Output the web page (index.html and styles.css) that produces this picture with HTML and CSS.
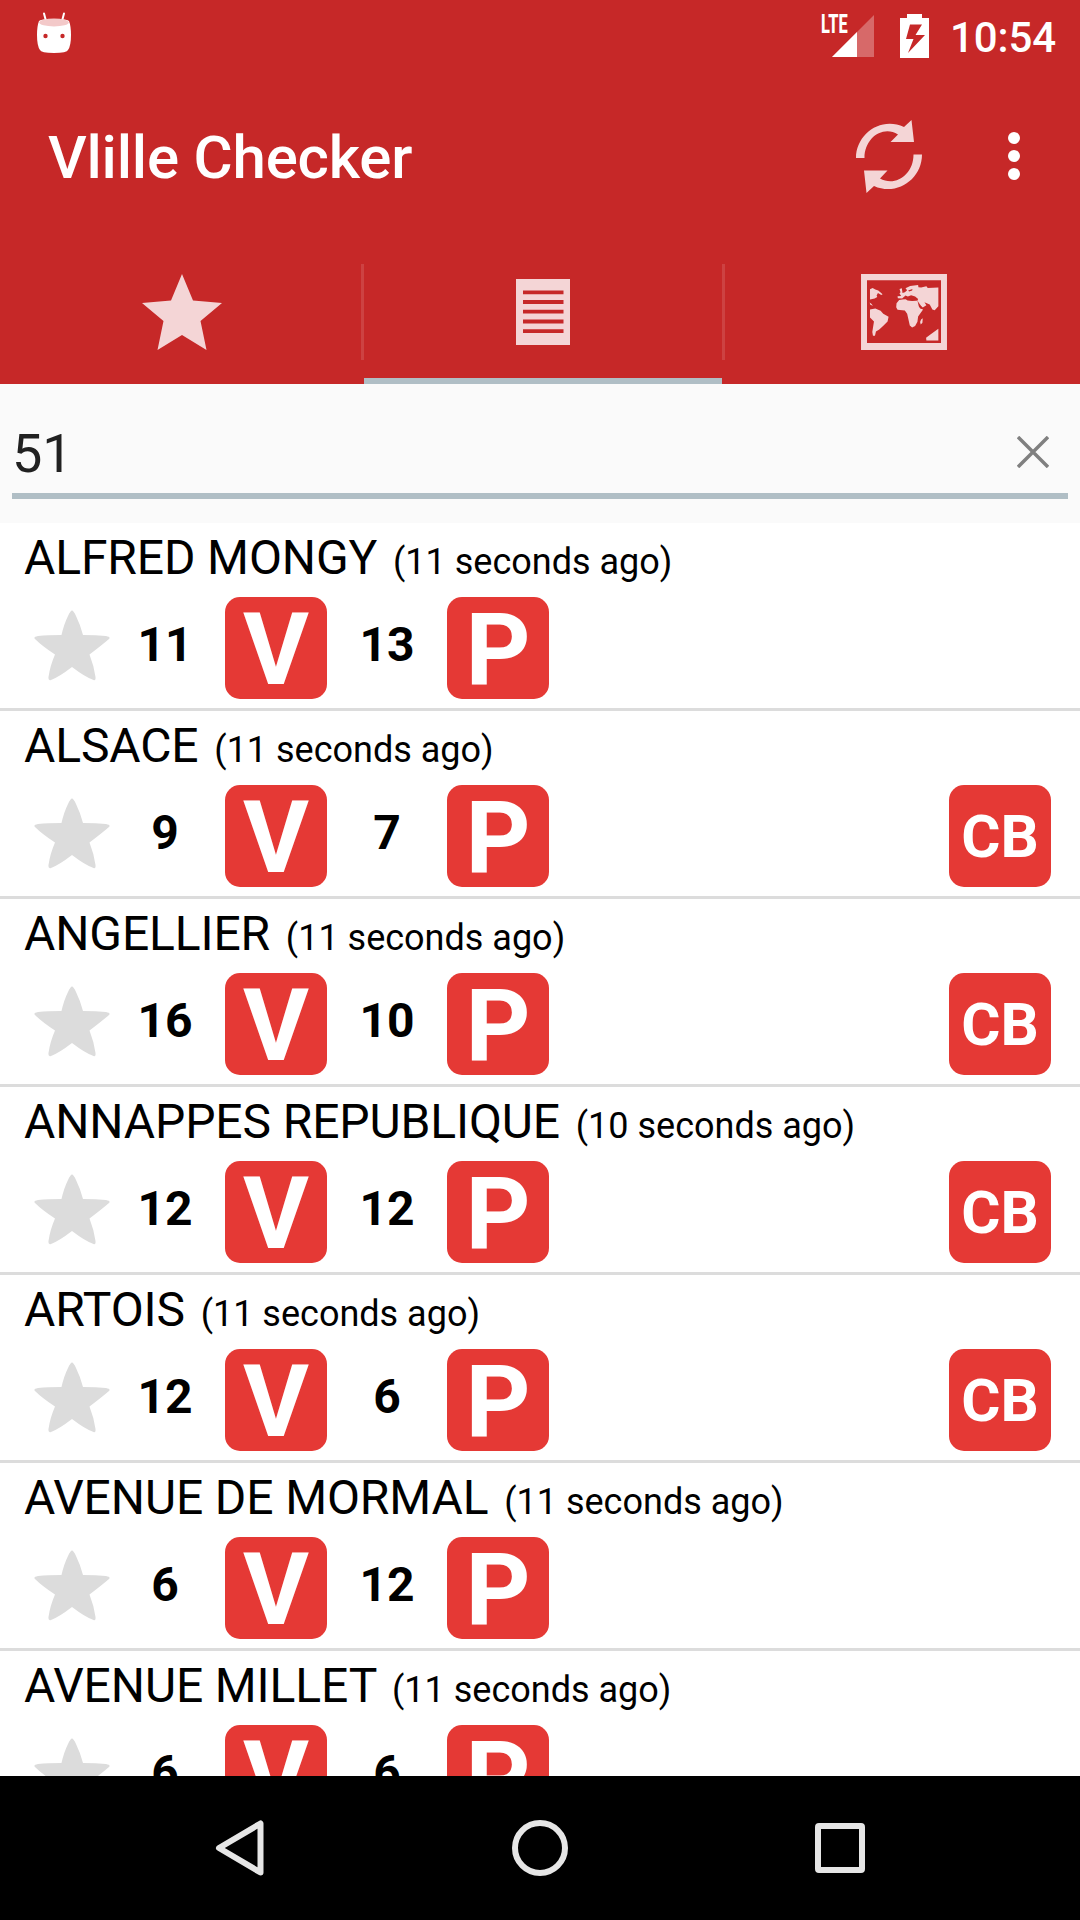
FILE: index.html
```html
<!DOCTYPE html>
<html lang="en">
<head>
<meta charset="utf-8">
<title>Vlille Checker</title>
<link rel="stylesheet" href="styles.css">
</head>
<body>
<svg class="defs" width="0" height="0">
  <symbol id="star" viewBox="0 0 76 71"><path d="M38 .5Q39.500 .5 42 6Q46 14 49 25Q62 25 72 26Q77 27 75 29Q68 35 55.500 44.500Q60 56 61.500 67Q62 71 59.500 70Q51 67 38 57Q25 67 17 70Q14 71 14.500 67Q16 56 21 44.500Q8 36 1 29Q-1 27 4 26Q14 25 27.500 25Q30 14 34 6Q36.500 .5 38 .5Z"/></symbol>
</svg>
<div class="screen">
  <header class="header">
    <div class="status">
      <svg class="droid" width="34" height="41" viewBox="0 0 34 41"><path d="M7 1.500L9 9M27 1.500L25 9" stroke="#fff" stroke-width="2" stroke-linecap="round"/><path d="M2 9Q3 7 17 7Q31 7 32 9Q34 14 34 23Q34 34 31 38Q30 41 17 41Q4 41 3 38Q0 34 0 23Q0 14 2 9Z" fill="#fff"/><ellipse cx="17" cy="10.500" rx="14.800" ry="3.900" fill="#f3c9c9"/><circle cx="8.500" cy="24" r="2.200" fill="#c62828"/><circle cx="25.500" cy="24" r="2.200" fill="#c62828"/></svg>
      <div class="status-right">
        <div class="signal">
          <span class="lte">LTE</span>
          <svg width="54" height="44" viewBox="0 0 54 44"><path d="M53 1V43H11Z" fill="#d76969"/><path d="M36 18V43H11Z" fill="#fff"/></svg>
        </div>
        <svg class="battery" width="29" height="44" viewBox="0 0 29 44"><path fill="#fff" fill-rule="evenodd" d="M7 0H22V4H29V44H0V4H7ZM10 10.500L6 25H13.500L8 39L25 21H15.500L22 10.500Z"/></svg>
        <span class="time">10:54</span>
      </div>
    </div>
    <div class="toolbar">
      <h1 class="title">Vlille Checker</h1>
      <svg class="refresh" width="66" height="73" viewBox="0 0 66 73"><g fill="#f4d5d6"><path d="M0 38C0 14 25-4 48 7L55.500 0L58 22H34.500L42 14.500C27 5 8.500 18 8.500 38Z"/><path d="M66 34.500C66 59 41 76.500 18 66L10.500 73L8 50.500H31.500L24 58.500C39 67 57.500 55 57.500 34.500Z"/></g></svg>
      <svg class="more" width="12" height="48" viewBox="0 0 12 48" fill="#fff"><circle cx="6" cy="6" r="6"/><circle cx="6" cy="24" r="6"/><circle cx="6" cy="42" r="6"/></svg>
    </div>
    <nav class="tabs">
      <div class="tab first"><svg width="80" height="76" viewBox="0 0 80 76"><path fill="#f4d5d6" d="M40 0L51 26.500L80 29L58.500 47L64.500 76L40 61L15.500 76L21.500 47L0 29L29 26.500Z"/></svg></div>
      <i class="divider"></i>
      <div class="tab active"><svg width="54" height="66" viewBox="0 0 54 66"><path fill="#f4d5d6" d="M0 0H54V66H0Z"/><path d="M7 13.300H47.500M7 23H47.500M7 32.700H47.500M7 42.500H47.500M7 52.200H47.500" stroke="#c62828" stroke-width="3.800"/></svg></div>
      <i class="divider"></i>
      <div class="tab"><svg width="86" height="76" viewBox="33 27 259 229"><g fill="#f4d5d6"><path fill-rule="evenodd" d="M33 27H292V256H33ZM51 46V235H274V46Z"/><path d="M60 73L68 69L76 74L85 77L98 88L94 90L84 84L80 92L82 96L74 101L60 104ZM59 113L64 117L69 123L61 120ZM60 134L76 131L92 138L100 147L116 156L113 170L101 182L88 194L78 200L75 213H69L67 202L72 170L60 158Z"/><path d="M149 86L152 82L149 72L156 70L158 84L165 82L172 76L167 70L181 63L205 60L206 67L214 68L230 64L234 69L266 68V124L255 136L248 134L240 119L224 112L230 121L219 128L213 122L206 112L203 106L205 102L196 95L184 91L174 95L167 92L157 101L144 100L143 94L154 93ZM148 105L168 102L173 107L187 108L203 107L207 124L211 131L220 134L205 155L203 171L196 184L187 188L180 182L172 147L165 137L143 135L139 127L140 115ZM214 164L219 160L218 174L213 179L211 172ZM229 219L240 211L266 192V227H230Z"/></g><path d="M160 102L177 98L185 103L201 100L203 106L188 107L173 104ZM175 77L188 72L187 77L178 80Z" fill="#c62828"/></svg></div>
    </nav>
  </header>
  <div class="search">
    <div class="field"><span class="query">51</span><svg class="clear" width="32" height="32" viewBox="0 0 32 32"><path d="M1 1L31 31M31 1L1 31" stroke="#808080" stroke-width="3.500"/></svg></div>
  </div>
  <main class="list">
    <section class="station"><div class="name">ALFRED MONGY <small>(11 seconds ago)</small></div><div class="info"><svg class="fav"><use href="#star"/></svg><b class="count">11</b><span class="badge">V</span><b class="count">13</b><span class="badge">P</span></div></section>
    <section class="station"><div class="name">ALSACE <small>(11 seconds ago)</small></div><div class="info"><svg class="fav"><use href="#star"/></svg><b class="count">9</b><span class="badge">V</span><b class="count">7</b><span class="badge">P</span><span class="badge card">CB</span></div></section>
    <section class="station"><div class="name">ANGELLIER <small>(11 seconds ago)</small></div><div class="info"><svg class="fav"><use href="#star"/></svg><b class="count">16</b><span class="badge">V</span><b class="count">10</b><span class="badge">P</span><span class="badge card">CB</span></div></section>
    <section class="station"><div class="name">ANNAPPES REPUBLIQUE <small>(10 seconds ago)</small></div><div class="info"><svg class="fav"><use href="#star"/></svg><b class="count">12</b><span class="badge">V</span><b class="count">12</b><span class="badge">P</span><span class="badge card">CB</span></div></section>
    <section class="station"><div class="name">ARTOIS <small>(11 seconds ago)</small></div><div class="info"><svg class="fav"><use href="#star"/></svg><b class="count">12</b><span class="badge">V</span><b class="count">6</b><span class="badge">P</span><span class="badge card">CB</span></div></section>
    <section class="station"><div class="name">AVENUE DE MORMAL <small>(11 seconds ago)</small></div><div class="info"><svg class="fav"><use href="#star"/></svg><b class="count">6</b><span class="badge">V</span><b class="count">12</b><span class="badge">P</span></div></section>
    <section class="station"><div class="name">AVENUE MILLET <small>(11 seconds ago)</small></div><div class="info"><svg class="fav"><use href="#star"/></svg><b class="count">6</b><span class="badge">V</span><b class="count">6</b><span class="badge">P</span></div></section>
  </main>
  <footer class="navbar">
    <svg width="50" height="58" viewBox="0 0 50 58"><path d="M45.500 4.500V53.500L4 29Z"/></svg>
    <svg width="56" height="56" viewBox="0 0 56 56"><circle cx="28" cy="28" r="25"/></svg>
    <svg width="50" height="50" viewBox="0 0 50 50"><rect x="3" y="3" width="44" height="44" rx="1"/></svg>
  </footer>
</div>
</body>
</html>
```
FILE: styles.css
```css
* { box-sizing: border-box; }
body { margin: 0; font-family: Roboto, sans-serif; color: #000; }
svg { display: block; flex: none; }
.defs { position: absolute; }
.screen { width: 1080px; height: 1920px; display: flex; flex-direction: column; overflow: hidden; background: #fff; }
.header { height: 384px; flex: none; background: #c62828; color: #fff; display: flex; flex-direction: column; }
.status { height: 72px; padding: 12px 24px 0 37px; display: flex; justify-content: space-between; align-items: flex-start; }
.status-right { display: flex; align-items: flex-start; padding-top: 2px; }
.signal { display: flex; position: relative; margin-right: 25px; width: 54px; }
.lte { position: absolute; left: 0; top: 0; font: 800 26px/20px Roboto, sans-serif; transform: scaleX(.63); transform-origin: 0 0; }
.time { font-size: 42px; font-weight: 500; line-height: 48px; letter-spacing: -.1px; margin: 0 0 0 21px; }
.toolbar { height: 168px; display: flex; align-items: center; padding: 0 60px 0 48px; }
.title { margin: 4px auto 0 0; font-size: 60px; line-height: 70px; font-weight: 500; letter-spacing: -.2px; }
.refresh { margin: 1px 86px 0 0; }
.tabs { height: 144px; display: flex; align-items: center; overflow: hidden; }
.tab { flex: 0 0 358px; height: 144px; display: flex; align-items: center; justify-content: center; border-bottom: 6px solid transparent; padding-top: 6px; }
.tab.first { flex-basis: 361px; padding-left: 3px; }
.tab.active { border-color: #b0bec5; }
.divider { flex: none; width: 3px; height: 96px; background: #cd4242; }
.search { height: 139px; flex: none; background: #fafafa; padding: 29px 12px 0; }
.field { height: 86px; border-bottom: 6px solid #b0bec5; padding: 0 19px 0 0; display: flex; align-items: center; justify-content: space-between; }
.query { font-size: 54px; line-height: 64px; color: #212121; padding-top: 1px; }
.clear { margin-bottom: 2px; }
.list { flex: 1; overflow: hidden; }
.station { height: 188px; border-bottom: 3px solid #dcdcdc; padding: 7px 29px 0 24px; }
.name { font-size: 48px; line-height: 56px; height: 67px; white-space: nowrap; letter-spacing: -.12px; }
.name small { font-size: 36px; letter-spacing: 0; margin-left: 4px; }
.info { display: flex; height: 102px; }
.fav { width: 76px; height: 71px; fill: #dcdcdc; margin: 13px 0 0 10px; }
.count { width: 120px; font-size: 48px; line-height: 56px; text-align: center; padding-top: 20px; }
.fav + .count { width: 115px; padding-right: 5px; }
.badge { width: 102px; height: 102px; border-radius: 15px; background: #e53935; color: #fff; font-weight: 700; font-size: 101px; line-height: 106px; text-align: center; }
.card { margin-left: auto; font-size: 60px; line-height: 104px; }
.navbar { height: 144px; flex: none; background: #000; display: flex; justify-content: space-between; align-items: center; padding: 0 215px; fill: none; stroke: #e6e6e6; stroke-width: 6; stroke-linejoin: round; }
```
